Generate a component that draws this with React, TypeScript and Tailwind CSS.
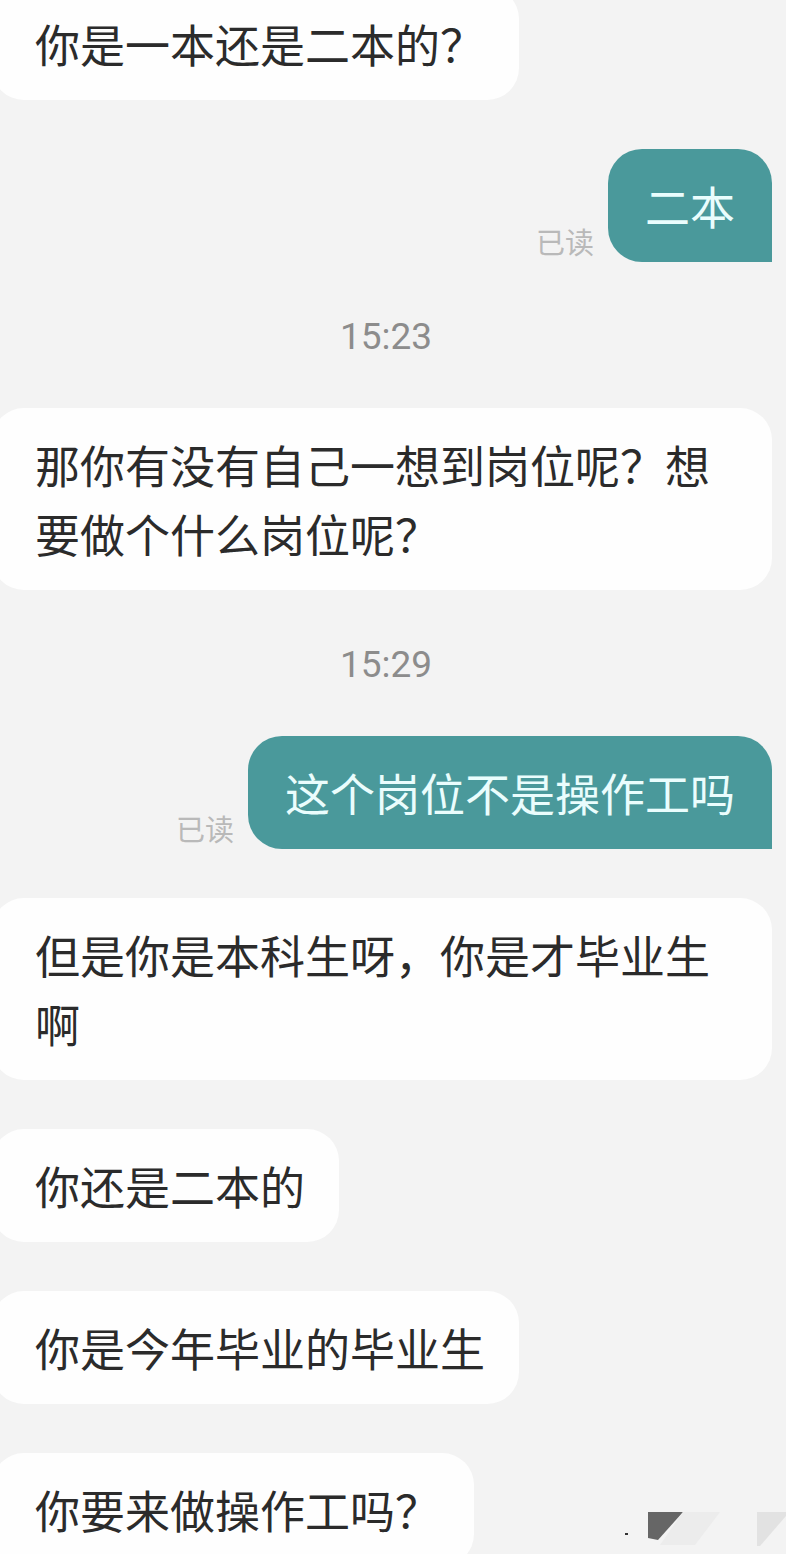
import type { ReactNode } from 'react';

function Left({ children }: { children: ReactNode }) {
  return (
    <div className="flex justify-start">
      <div className="-ml-2 max-w-[780px] rounded-[32px] bg-[#fefefe] py-[22px] pl-[43px] pr-[34px] text-[45px] leading-[69px] text-[#2b2b2b]">
        {children}
      </div>
    </div>
  );
}

function Right({ children }: { children: ReactNode }) {
  return (
    <div className="flex items-end justify-end gap-[14px] pr-[14px]">
      <span className="mb-[6px] text-[29px] leading-none text-[#b9b9b9]">已读</span>
      <div className="rounded-[34px] rounded-br-none bg-[#4a999b] px-[37px] py-[22px] text-[45px] leading-[69px] text-[#eafdfd]">
        {children}
      </div>
    </div>
  );
}

function Time({ t }: { t: string }) {
  return (
    <div className="h-[48px] pr-[14px] text-center font-['Roboto',sans-serif] text-[37px] leading-[52px] text-[#8c8c8c]">
      {t}
    </div>
  );
}

export default function App() {
  return (
    <div className="relative h-[1554px] w-[786px] overflow-hidden bg-[#f3f3f3] font-['Noto_Sans_CJK_SC','Noto_Sans',sans-serif]">
      <div className="-mt-[13px] flex flex-col gap-[49px]">
        <Left>你是一本还是二本的？</Left>
        <Right>二本</Right>
        <Time t="15:23" />
        <Left>那你有没有自己一想到岗位呢？想要做个什么岗位呢？</Left>
        <Time t="15:29" />
        <Right>这个岗位不是操作工吗</Right>
        <Left>但是你是本科生呀，你是才毕业生啊</Left>
        <Left>你还是二本的</Left>
        <Left>你是今年毕业的毕业生</Left>
        <Left>你要来做操作工吗？</Left>
      </div>

      {/* watermark fragment, bottom right */}
      <svg className="absolute bottom-0 right-0" width="170" height="54" viewBox="616 1500 170 54">
        <rect x="625" y="1533" width="3" height="2" fill="#333" />
        <polygon points="648,1512 683,1512 658,1540 648,1538" fill="#666" />
        <polygon points="683,1512 720,1512 695,1545 660,1545" fill="#ececec" />
        <polygon points="757,1512 786,1512 786,1516 760,1546 757,1546" fill="#e2e2e2" />
      </svg>
    </div>
  );
}
